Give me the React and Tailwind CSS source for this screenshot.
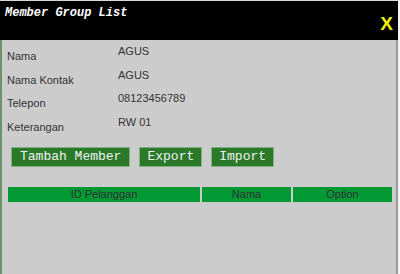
import React from 'react';

const rows = [
  { label: 'Nama', value: 'AGUS' },
  { label: 'Nama Kontak', value: 'AGUS' },
  { label: 'Telepon', value: '08123456789' },
  { label: 'Keterangan', value: 'RW 01' },
];

export default function App() {
  return (
    <div className="w-[400px] h-[274px] bg-[#f4f4f4] overflow-hidden">
      <div className="w-[398px] h-[274px] flex flex-col border-t border-[#d8d8d8]">
        <div className="h-[39px] bg-black flex justify-between pl-[5px] pr-[5px] shrink-0">
          <span className="text-[12px] leading-[14px] pt-[5px] font-bold italic text-white [font-family:'Liberation_Mono',monospace]">
            Member Group List
          </span>
          <span className="text-[19px] leading-[19px] pt-[13px] font-bold text-[#f2f200] [font-family:'Liberation_Sans',Arial,sans-serif]">
            X
          </span>
        </div>
        <div className="flex-1 bg-[#cccccc] border-l-2 border-[#6a946a] border-r-2 border-r-[#9a9a9a] pt-[5px] pl-[5px] pr-[4px] [font-family:'Liberation_Sans',Arial,sans-serif]">
          {rows.map((r) => (
            <div key={r.label} className="h-[23.5px] flex text-[11px] leading-[13px] text-[#333]">
              <div className="w-[111px] pt-[5px]">{r.label}</div>
              <div>{r.value}</div>
            </div>
          ))}
          <div className="flex gap-[9px] pl-[4px] mt-[8px] [font-family:'Liberation_Mono',monospace]">
            <button className="h-[20px] px-[8px] bg-[#2a7a2a] border border-[#7fb07f] text-[13px] leading-[18px] text-[#f0f0f0]">Tambah Member</button>
            <button className="h-[20px] px-[7px] bg-[#2a7a2a] border border-[#7fb07f] text-[13px] leading-[18px] text-[#f0f0f0]">Export</button>
            <button className="h-[20px] px-[7px] bg-[#2a7a2a] border border-[#7fb07f] text-[13px] leading-[18px] text-[#f0f0f0]">Import</button>
          </div>
          <div className="flex mt-[20px] ml-[1px] h-[15px] text-[11px] leading-[15px] text-[#333]">
            <div className="w-[192px] bg-[#009933] text-center">ID Pelanggan</div>
            <div className="w-[89px] ml-[2px] bg-[#009933] text-center">Nama</div>
            <div className="w-[99px] ml-[2px] bg-[#009933] text-center">Option</div>
          </div>
        </div>
      </div>
    </div>
  );
}
